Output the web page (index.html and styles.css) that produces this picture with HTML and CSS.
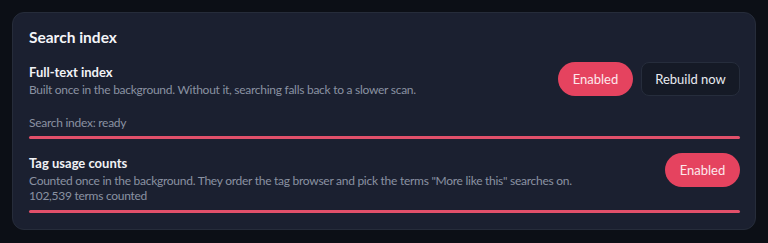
FILE: index.html
```html
<!DOCTYPE html>
<html>
<head>
<meta charset="utf-8">
<link rel="stylesheet" href="styles.css">
</head>
<body>
<section class="card">
  <h2 class="card-title">Search index</h2>
  <div class="row">
    <div class="row-text">
      <div class="row-title">Full-text index</div>
      <div class="row-desc">Built once in the background. Without it, searching falls back to a slower scan.</div>
    </div>
    <div class="actions">
      <button class="btn btn-on">Enabled</button>
      <button class="btn btn-ghost">Rebuild now</button>
    </div>
  </div>
  <div class="status">Search index: ready</div>
  <div class="bar"></div>
  <div class="row row-second">
    <div class="row-text">
      <div class="row-title">Tag usage counts</div>
      <div class="row-desc">Counted once in the background. They order the tag browser and pick the terms "More like this" searches on.</div>
      <div class="row-desc">102,539 terms counted</div>
    </div>
    <div class="actions">
      <button class="btn btn-on">Enabled</button>
    </div>
  </div>
  <div class="bar bar-last"></div>
</section>
</body>
</html>
```
FILE: styles.css
```css
html, body {
  margin: 0;
  padding: 0;
  background: #0c0f16;
}
body {
  font-family: Lato, "Noto Sans", sans-serif;
  color: #eef0f4;
  padding: 12px;
}
.card {
  background: #1b2030;
  border: 1px solid #262c3a;
  border-radius: 12px;
  padding: 14px 15px 16px 16px;
}
.card-title {
  margin: 0 0 14px;
  font-size: 15.5px;
  font-weight: 700;
  line-height: 21px;
  color: #f4f5f8;
}
.row {
  display: flex;
  justify-content: space-between;
  align-items: flex-start;
  gap: 16px;
}
.row-title {
  font-size: 13px;
  font-weight: 700;
  line-height: 20px;
  color: #f1f2f6;
}
.row-desc {
  font-size: 12px;
  letter-spacing: -0.27px;
  line-height: 15px;
  color: #8a92a2;
}
.actions {
  display: flex;
  gap: 8px;
  flex-shrink: 0;
}
.btn {
  font-family: inherit;
  font-size: 13px;
  height: 34px;
  cursor: pointer;
}
.btn-on {
  background: #e5435f;
  color: #fde8ec;
  border: none;
  border-radius: 17px;
  width: 75px;
  padding: 0;
}
.btn-ghost {
  background: #151a26;
  color: #e8eaf0;
  border: 1px solid #262d3c;
  border-radius: 8px;
  width: 99px;
  padding: 0;
}
.status {
  margin-top: 18px;
  font-size: 12px;
  letter-spacing: -0.27px;
  line-height: 16px;
  color: #8a92a2;
}
.bar {
  margin-top: 5px;
  height: 3px;
  border-radius: 2px;
  background: #e2506a;
}
.row-second {
  margin-top: 14px;
}
.bar-last {
  margin-top: 7px;
}
```
